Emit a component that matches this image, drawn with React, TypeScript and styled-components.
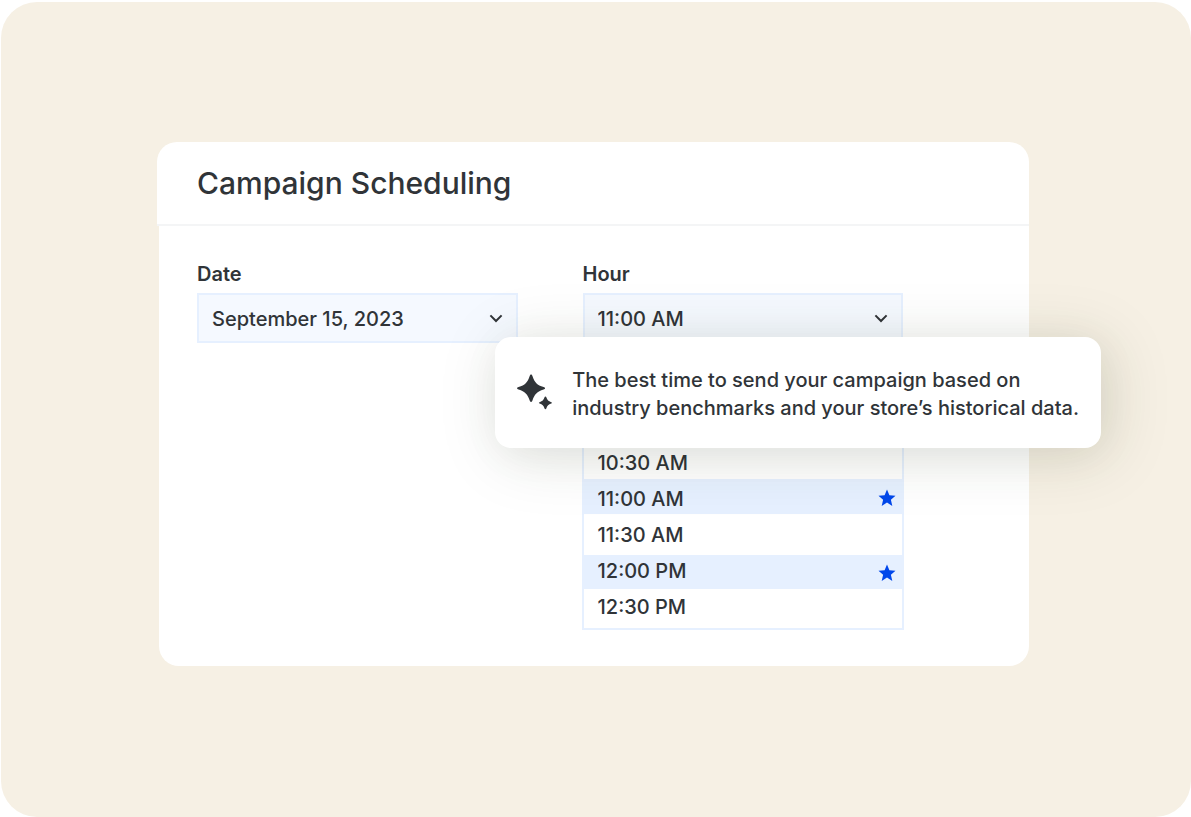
import React from "react";
import styled, { createGlobalStyle } from "styled-components";

const ink = "#303438";
const pale = "#e6f0ff";

const GlobalStyle = createGlobalStyle`
  *, *::before, *::after { box-sizing: border-box; }
  body {
    margin: 0;
    background: #fff;
    color: ${ink};
    font-family: Inter, "Liberation Sans", sans-serif;
  }
`;

const Page = styled.main`
  min-height: 100vh;
  padding: 2px 0 0 1px;
  display: flex;
`;

const Backdrop = styled.section`
  flex: 1;
  padding: 140px 162px 151px 156px;
  background: #f6f0e4;
  border-radius: 36px;
`;

const Card = styled.article`
  position: relative;
`;

const CardHeader = styled.header`
  padding: 20px 40px;
  background: #fff;
  border-bottom: 2px solid #f4f5f6;
  border-radius: 20px 20px 0 0;
`;

const Title = styled.h1`
  margin: 0;
  font-size: 30px;
  line-height: 42px;
  font-weight: 500;
`;

const CardBody = styled.form`
  margin-left: 2px;
  padding: 34px 126px 36px 38px;
  display: grid;
  grid-template-columns: 1fr 1fr;
  column-gap: 65px;
  align-items: start;
  background: #fff;
  border-radius: 0 0 20px 20px;
`;

const Field = styled.div`
  display: flex;
  flex-direction: column;
`;

const Label = styled.label`
  margin-bottom: 5px;
  font-size: 20px;
  line-height: 28px;
  font-weight: 600;
`;

const SelectFrame = styled.div`
  display: grid;
  align-items: center;

  & > * { grid-area: 1 / 1; }
`;

const Select = styled.select`
  appearance: none;
  width: 100%;
  height: 50px;
  padding: 2px 40px 0 13px;
  border: 2px solid ${pale};
  border-radius: 0;
  background: #f5f9ff;
  color: inherit;
  font: 500 20px/28px Inter, "Liberation Sans", sans-serif;
`;

const Chevron = styled.svg`
  justify-self: end;
  margin-right: 15px;
  pointer-events: none;
`;

const HourList = styled.ul`
  margin: 0 -1px;
  padding: 106px 0 0;
  list-style: none;
  border: 2px solid ${pale};
  border-top: 0;
`;

const HourButton = styled.button<{ $best?: boolean }>`
  width: 100%;
  display: flex;
  align-items: center;
  justify-content: space-between;
  padding: 0 6px 0 14px;
  border: 0;
  background: ${(p) => (p.$best ? pale : "transparent")};
  color: inherit;
  font: 500 20px/28px Inter, "Liberation Sans", sans-serif;
  text-align: left;
`;

const Time = styled.span<{ $before: number; $after: number }>`
  padding: ${(p) => p.$before}px 0 ${(p) => p.$after}px;
`;

const StarIcon = styled.svg`
  margin-top: 2px;
`;

const Tip = styled.aside`
  position: absolute;
  top: 195px;
  left: 338px;
  right: -72px;
  padding: 29px 22px 26px;
  display: flex;
  align-items: flex-start;
  gap: 20px;
  background: #fff;
  border-radius: 16px;
  box-shadow: 7px 7px 64px 2px rgba(36, 56, 16, 0.13), 2px 6px 40px rgba(20, 20, 24, 0.05);
`;

const SparklesIcon = styled.svg`
  margin-top: 8px;
`;

const TipText = styled.p`
  margin: 0;
  font-size: 20px;
  line-height: 28px;
  font-weight: 500;
  white-space: nowrap;
`;

const ChevronDown = () => (
  <Chevron width="14" height="9" viewBox="0 0 14 9" aria-hidden="true">
    <path d="M1.4 1.4 7 7 12.6 1.4" fill="none" stroke={ink} strokeWidth="2" />
  </Chevron>
);

const Star = () => (
  <StarIcon width="18" height="18" viewBox="0 0 18 18" role="img" aria-label="Best time">
    <path
      d="M9 .4 11.4 6.2 17.5 6.7 12.9 10.7 14.3 16.9 9 13.6 3.7 16.9 5.1 10.7.5 6.7 6.6 6.2Z"
      fill="#0047eb"
    />
  </StarIcon>
);

const Sparkles = () => (
  <SparklesIcon width="36" height="36" viewBox="0 0 36 36" fill={ink} aria-hidden="true">
    <path d="M14.4 0C15.2 0 15.5.7 15.8 1.6 18 8.3 20.5 10.9 27.2 13 28.1 13.3 28.7 13.6 28.7 14.2S28.1 15.1 27.2 15.4C20.5 17.5 18 20.1 15.8 26.8 15.5 27.7 15.2 28.2 14.4 28.2S13.3 27.7 13 26.8C10.8 20.1 8.3 17.5 1.6 15.4.7 15.1.1 14.8.1 14.2S.7 13.3 1.6 13C8.3 10.9 10.8 8.3 13 1.6 13.3.7 13.6 0 14.4 0Z" />
    <path d="M29.1 22.5C29.6 22.5 29.8 22.9 30 23.4 31 26.3 32.2 27.4 35 28.4 35.5 28.6 35.8 28.8 35.8 29.1S35.5 29.6 35 29.8C32.2 30.8 31 31.9 30 34.8 29.8 35.3 29.6 35.6 29.1 35.6S28.4 35.3 28.2 34.8C27.2 31.9 26 30.8 23.2 29.8 22.7 29.6 22.4 29.4 22.4 29.1S22.7 28.6 23.2 28.4C26 27.4 27.2 26.3 28.2 23.4 28.4 22.9 28.6 22.5 29.1 22.5Z" />
  </SparklesIcon>
);

const hours = [
  { time: "10:30 AM", best: false, before: 0, after: 2 },
  { time: "11:00 AM", best: true, before: 6, after: 1 },
  { time: "11:30 AM", best: false, before: 7, after: 6 },
  { time: "12:00 PM", best: true, before: 2, after: 4 },
  { time: "12:30 PM", best: false, before: 4, after: 7 },
];

export default function App() {
  return (
    <Page>
      <GlobalStyle />
      <Backdrop>
        <Card>
          <CardHeader>
            <Title>Campaign Scheduling</Title>
          </CardHeader>
          <CardBody>
            <Field>
              <Label htmlFor="date">Date</Label>
              <SelectFrame>
                <Select id="date">
                  <option>September 15, 2023</option>
                </Select>
                <ChevronDown />
              </SelectFrame>
            </Field>
            <Field>
              <Label htmlFor="hour">Hour</Label>
              <SelectFrame>
                <Select id="hour">
                  <option>11:00 AM</option>
                </Select>
                <ChevronDown />
              </SelectFrame>
              <HourList>
                {hours.map((h) => (
                  <li key={h.time}>
                    <HourButton type="button" $best={h.best}>
                      <Time $before={h.before} $after={h.after}>
                        {h.time}
                      </Time>
                      {h.best && <Star />}
                    </HourButton>
                  </li>
                ))}
              </HourList>
            </Field>
          </CardBody>
          <Tip>
            <Sparkles />
            <TipText>
              The best time to send your campaign based on
              <br />
              industry benchmarks and your store’s historical data.
            </TipText>
          </Tip>
        </Card>
      </Backdrop>
    </Page>
  );
}
